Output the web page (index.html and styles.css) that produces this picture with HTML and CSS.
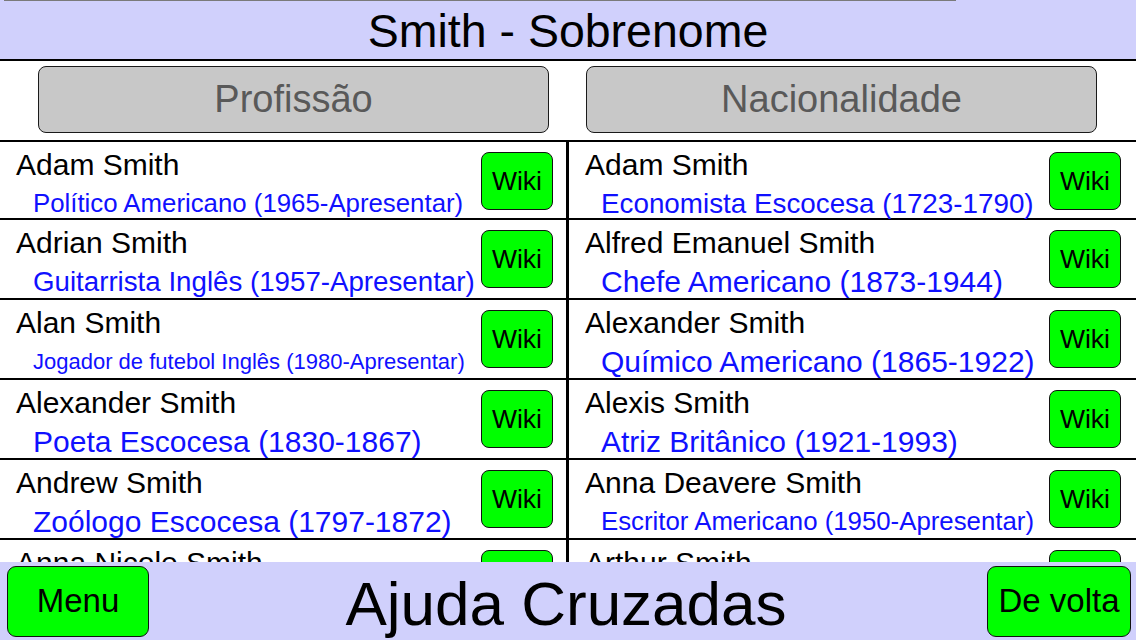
FILE: index.html
```html
<!DOCTYPE html>
<html lang="pt">
<head>
<meta charset="utf-8">
<title>Smith - Sobrenome</title>
<link rel="stylesheet" href="styles.css">
</head>
<body>
<div class="app">
  <header class="topbar">
    <div class="scroll-ind"></div>
    <h1 class="title">Smith - Sobrenome</h1>
  </header>

  <div class="filters">
    <button class="filter">Profissão</button>
    <button class="filter">Nacionalidade</button>
  </div>

  <div class="lists">
    <ul class="col col-left">
      <li class="row">
        <div class="info"><div class="name">Adam Smith</div><div class="sub"><span class="fs26">Político Americano (1965-Apresentar)</span></div></div>
        <button class="wiki">Wiki</button>
      </li>
      <li class="row">
        <div class="info"><div class="name">Adrian Smith</div><div class="sub"><span class="fs277">Guitarrista Inglês (1957-Apresentar)</span></div></div>
        <button class="wiki">Wiki</button>
      </li>
      <li class="row">
        <div class="info"><div class="name">Alan Smith</div><div class="sub"><span class="fs22">Jogador de futebol Inglês (1980-Apresentar)</span></div></div>
        <button class="wiki">Wiki</button>
      </li>
      <li class="row">
        <div class="info"><div class="name">Alexander Smith</div><div class="sub"><span class="fs30">Poeta Escocesa (1830-1867)</span></div></div>
        <button class="wiki">Wiki</button>
      </li>
      <li class="row">
        <div class="info"><div class="name">Andrew Smith</div><div class="sub"><span class="fs30">Zoólogo Escocesa (1797-1872)</span></div></div>
        <button class="wiki">Wiki</button>
      </li>
      <li class="row">
        <div class="info"><div class="name">Anna Nicole Smith</div><div class="sub"><span class="fs26">Modelo Americano (1967-2007)</span></div></div>
        <button class="wiki">Wiki</button>
      </li>
    </ul>
    <ul class="col col-right">
      <li class="row">
        <div class="info"><div class="name">Adam Smith</div><div class="sub"><span class="fs278">Economista Escocesa (1723-1790)</span></div></div>
        <button class="wiki">Wiki</button>
      </li>
      <li class="row">
        <div class="info"><div class="name">Alfred Emanuel Smith</div><div class="sub"><span class="fs30">Chefe Americano (1873-1944)</span></div></div>
        <button class="wiki">Wiki</button>
      </li>
      <li class="row">
        <div class="info"><div class="name">Alexander Smith</div><div class="sub"><span class="fs30">Químico Americano (1865-1922)</span></div></div>
        <button class="wiki">Wiki</button>
      </li>
      <li class="row">
        <div class="info"><div class="name">Alexis Smith</div><div class="sub"><span class="fs30">Atriz Britânico (1921-1993)</span></div></div>
        <button class="wiki">Wiki</button>
      </li>
      <li class="row">
        <div class="info"><div class="name">Anna Deavere Smith</div><div class="sub"><span class="fs26">Escritor Americano (1950-Apresentar)</span></div></div>
        <button class="wiki">Wiki</button>
      </li>
      <li class="row">
        <div class="info"><div class="name">Arthur Smith</div><div class="sub"><span class="fs26">Comediante Inglês (1954-Apresentar)</span></div></div>
        <button class="wiki">Wiki</button>
      </li>
    </ul>
  </div>

  <footer class="bottombar">
    <button class="green-btn menu">Menu</button>
    <div class="app-name">Ajuda Cruzadas</div>
    <button class="green-btn back">De volta</button>
  </footer>
</div>
</body>
</html>
```

FILE: styles.css
```css
* { box-sizing: border-box; }

html, body {
  margin: 0;
  padding: 0;
  width: 1136px;
  height: 640px;
  overflow: hidden;
  background: #fff;
  font-family: "Liberation Sans", Arial, Helvetica, sans-serif;
  color: #000;
}

.app {
  width: 1136px;
  height: 640px;
  display: flex;
  flex-direction: column;
  overflow: hidden;
}

/* Header */
.topbar {
  position: relative;
  flex: 0 0 61px;
  background: #d0d0fc;
  border-bottom: 2px solid #000;
  display: flex;
  align-items: center;
  justify-content: center;
  padding-top: 3px;
}

.scroll-ind {
  position: absolute;
  top: 0;
  left: 4px;
  width: 952px;
  height: 1px;
  background: #7a7a7a;
}

.title {
  margin: 0;
  font-size: 46.5px;
  font-weight: normal;
  line-height: 1;
}

/* Filter buttons */
.filters {
  flex: 0 0 79px;
  display: grid;
  grid-template-columns: 511px 511px;
  column-gap: 37px;
  padding: 5px 39px 0 38px;
  align-items: start;
}

.filter {
  height: 67px;
  margin: 0;
  padding: 0;
  background: #c8c8c8;
  border: 1.5px solid #1a1a1a;
  border-radius: 8px;
  font-family: inherit;
  font-size: 38px;
  color: #595959;
}

/* Lists */
.lists {
  flex: 1 1 auto;
  min-height: 0;
  overflow: hidden;
  display: grid;
  grid-template-columns: 569px 1fr;
  border-top: 2px solid #000;
}

.col {
  list-style: none;
  margin: 0;
  padding: 0;
}

.col-left {
  border-right: 3px solid #000;
}

.row {
  height: 80px;
  border-bottom: 2px solid #000;
  display: grid;
  grid-template-columns: 1fr 72px;
  align-items: start;
  padding: 6px 13px 0 16px;
}

.col-right .row {
  padding-right: 15px;
}

.row:first-child {
  height: 78px;
}

.info {
  min-width: 0;
}

.name {
  font-size: 30px;
  line-height: 34px;
  white-space: nowrap;
}

.sub {
  height: 43px;
  display: flex;
  align-items: center;
  padding-left: 17px;
  color: #1010ff;
  white-space: nowrap;
}

.col-right .sub {
  padding-left: 16px;
}

.fs22 { font-size: 22px; }
.fs26 { font-size: 25.8px; }
.fs277 { font-size: 27.7px; }
.fs278 { font-size: 27.8px; }
.fs30 { font-size: 30px; }

.wiki {
  margin: 4px 0 0 0;
  padding: 0;
  width: 72px;
  height: 58px;
  background: #00ff00;
  border: 1.5px solid #111;
  border-radius: 8px;
  font-family: inherit;
  font-size: 26.5px;
  color: #000;
}

/* Footer */
.bottombar {
  flex: 0 0 78px;
  background: #d0d0fc;
  display: flex;
  align-items: center;
  justify-content: space-between;
  padding: 0 5px 0 7px;
}

.green-btn {
  margin: 0;
  padding: 0;
  height: 71px;
  background: #00ff00;
  border: 1.5px solid #111;
  border-radius: 9px;
  font-family: inherit;
  font-size: 33px;
  color: #000;
}

.menu { width: 142px; }
.back { width: 144px; }

.app-name {
  font-size: 62px;
  line-height: 1;
  padding-top: 6px;
  margin-right: 4px;
}
```
